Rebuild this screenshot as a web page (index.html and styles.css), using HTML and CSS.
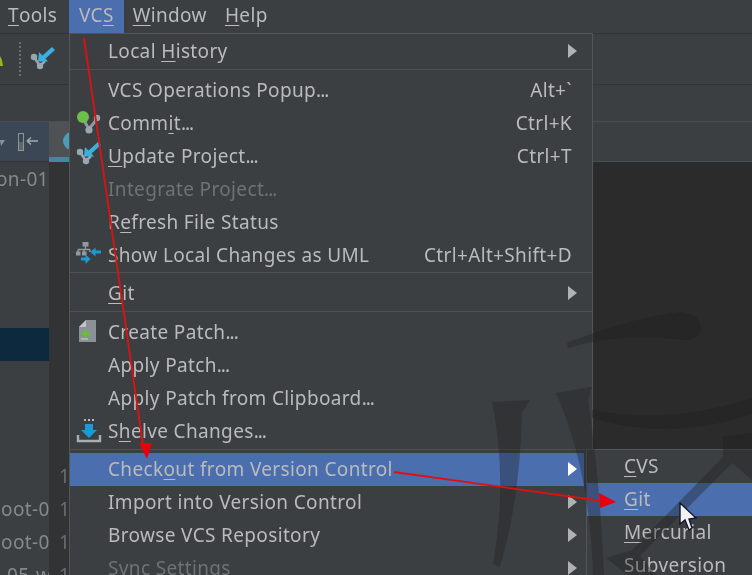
FILE: index.html
```html
<!DOCTYPE html>
<html lang="en">
<head>
    <meta charset="UTF-8">
    <meta name="viewport" content="width=device-width, initial-scale=1.0">
    <title>VCS Menu</title>
    <link rel="stylesheet" href="styles.css">
</head>
<body>
    <svg class="defs" width="0" height="0">
        <symbol id="update-icon" viewBox="0 0 26 26">
            <path d="M4 11 L10 20 L15 15" fill="none" stroke="#9aa7b0" stroke-width="2.5"/>
            <circle cx="4" cy="11" r="3.2" fill="#9aa7b0"/>
            <circle cx="10" cy="20" r="3.2" fill="#9aa7b0"/>
            <path d="M8 15.5 L9 6 L12.5 9.5 L22 1 L25 4 L15.5 12.5 L18 15.5 Z" fill="#3bb0e0"/>
        </symbol>
        <symbol id="submenu-arrow" viewBox="0 0 9 14">
            <path d="M0 0 L9 7 L0 14 Z" fill="currentColor"/>
        </symbol>
    </svg>

    <div class="page">
        <div class="menubar">
            <span class="menubar-item"><u>T</u>ools</span>
            <span class="menubar-item active">VC<u>S</u></span>
            <span class="menubar-item"><u>W</u>indow</span>
            <span class="menubar-item"><u>H</u>elp</span>
        </div>

        <div class="toolbar">
            <svg class="tool-android" width="6" height="14" viewBox="0 0 6 14"><path d="M0 12 L0 5 L2 2 L4 6 L5 12 Z" fill="#9cb31c"/></svg>
            <span class="tool-sep"></span>
            <svg class="tool-update" width="26" height="26"><use href="#update-icon"/></svg>
        </div>
        <div class="navbar"></div>

        <div class="workspace">
            <div class="sidebar">
                <div class="sidebar-head">
                    <svg class="head-drop" width="5" height="6" viewBox="0 0 5 6"><path d="M0 0 H5 L1 6 Z" fill="#8c9399"/></svg>
                    <svg class="head-pin" width="20" height="18" viewBox="0 0 20 18">
                        <rect x="0.5" y="0.5" width="5" height="17" fill="#5f6568" stroke="#8c9399"/>
                        <rect x="1" y="1" width="4" height="8" fill="#3b4754"/>
                        <path d="M9 8 H20 M9 8 L13 4.5 M9 8 L13 11.5" fill="none" stroke="#a5aaae" stroke-width="1.4"/>
                    </svg>
                </div>
                <div class="tree">
                    <div class="tree-row name-a">on-01</div>
                    <div class="tree-row"></div>
                    <div class="tree-row"></div>
                    <div class="tree-row"></div>
                    <div class="tree-row"></div>
                    <div class="tree-row selected"></div>
                    <div class="tree-row"></div>
                    <div class="tree-row"></div>
                    <div class="tree-row"></div>
                    <div class="tree-row"></div>
                    <div class="tree-row name-b">boot-01</div>
                    <div class="tree-row name-b">boot-04</div>
                    <div class="tree-row name-c">05-w</div>
                </div>
            </div>
            <div class="gutter">
                <div class="gutter-tab">
                    <span class="tab-dot"></span>
                </div>
                <div class="gutter-lines">
                    <div class="line-no">1</div>
                    <div class="line-no">1</div>
                    <div class="line-no">1</div>
                    <div class="line-no">1</div>
                </div>
            </div>
            <div class="editor"></div>
        </div>

        <div class="menu">
            <div class="menu-row"><span class="label">Local <u>H</u>istory</span><svg class="arrow" width="9" height="14"><use href="#submenu-arrow"/></svg></div>
            <div class="menu-sep"></div>
            <div class="menu-row"><span class="label">VCS Operations Popup<span class="dots">...</span></span><span class="keys">Alt+`</span></div>
            <div class="menu-row">
                <svg class="icon" width="26" height="26" viewBox="0 0 26 26">
                    <path d="M7 9 L13 19 L21 9" fill="none" stroke="#8f9aa2" stroke-width="3"/>
                    <circle cx="21" cy="8" r="3.2" fill="#9aa7b0"/>
                    <circle cx="13" cy="20" r="3.6" fill="#9aa7b0"/>
                    <circle cx="7" cy="7" r="6" fill="#6cc04a"/>
                </svg>
                <span class="label">Comm<u>i</u>t<span class="dots">...</span></span><span class="keys">Ctrl+K</span>
            </div>
            <div class="menu-row">
                <svg class="icon icon-high" width="26" height="26"><use href="#update-icon"/></svg>
                <span class="label"><u>U</u>pdate Project<span class="dots">...</span></span><span class="keys">Ctrl+T</span>
            </div>
            <div class="menu-row disabled"><span class="label">Integrate Project<span class="dots">...</span></span></div>
            <div class="menu-row"><span class="label">R<u>e</u>fresh File Status</span></div>
            <div class="menu-row">
                <svg class="icon icon-high" width="26" height="26" viewBox="0 0 26 26">
                    <rect x="6.5" y="2" width="6" height="4.5" fill="#8f9aa2"/>
                    <path d="M9.5 6 V9.5 M2 9.5 H14 M2 9.5 V12 M8 9.5 V12 M14 9.5 V12" fill="none" stroke="#8f9aa2" stroke-width="1.4"/>
                    <rect x="0" y="11.5" width="4.5" height="4" fill="#8f9aa2"/>
                    <rect x="6" y="11.5" width="4.5" height="4" fill="#8f9aa2"/>
                    <path d="M25 10.5 H19.5 V7.5 L14.5 12 L19.5 16.5 V13.5 H25 Z" fill="#1b9ad6"/>
                    <path d="M5 17.5 H9.5 V14.5 L14.5 19 L9.5 24 V20.5 H5 Z" fill="#1b9ad6"/>
                </svg>
                <span class="label">Show Local Changes as UML</span><span class="keys">Ctrl+Alt+Shift+D</span>
            </div>
            <div class="menu-sep flush"></div>
            <div class="menu-row"><span class="label"><u>G</u>it</span><svg class="arrow" width="9" height="14"><use href="#submenu-arrow"/></svg></div>
            <div class="menu-sep"></div>
            <div class="menu-row">
                <svg class="icon" width="26" height="26" viewBox="0 0 26 26">
                    <path d="M3 8 L10 1 H20 V23 H3 Z" fill="#8b9296"/>
                    <path d="M3 8 L10 1 V8 Z" fill="#c0c4c6"/>
                    <path d="M6 15 H13 M9.5 11 V19" stroke="#62c820" stroke-width="2"/>
                    <path d="M5 20 H12" stroke="#c5c9cb" stroke-width="1.2"/>
                </svg>
                <span class="label">Create Patch<span class="dots">...</span></span>
            </div>
            <div class="menu-row"><span class="label">Apply Patch<span class="dots">...</span></span></div>
            <div class="menu-row"><span class="label">Apply Patch from Clipboard<span class="dots">...</span></span></div>
            <div class="menu-row">
                <svg class="icon" width="26" height="26" viewBox="0 0 26 26">
                    <path d="M8 2 H10 M12 2 H14 M16 2 H18" stroke="#b5bcc0" stroke-width="2"/>
                    <path d="M9 6 H17 V12 H21 L13 20 L5 12 H9 Z" fill="#1b9ad6"/>
                    <path d="M2 17 V23 H24 V17" fill="none" stroke="#a8afb3" stroke-width="2.4"/>
                </svg>
                <span class="label">S<u>h</u>elve Changes<span class="dots">...</span></span>
            </div>
            <div class="menu-sep short"></div>
            <div class="menu-row highlight"><span class="label">Check<u>o</u>ut from Version Control</span><svg class="arrow bright" width="9" height="14"><use href="#submenu-arrow"/></svg></div>
            <div class="menu-row"><span class="label">Import into Version Control</span><svg class="arrow" width="9" height="14"><use href="#submenu-arrow"/></svg></div>
            <div class="menu-row"><span class="label">Browse VCS Repository</span><svg class="arrow" width="9" height="14"><use href="#submenu-arrow"/></svg></div>
            <div class="menu-row disabled"><span class="label">Sync Settings</span><svg class="arrow" width="9" height="14"><use href="#submenu-arrow"/></svg></div>
        </div>

        <div class="submenu">
            <div class="menu-row"><span class="label"><u>C</u>VS</span></div>
            <div class="menu-row highlight"><span class="label"><u>G</u>it</span></div>
            <div class="menu-row"><span class="label"><u>M</u>ercurial</span></div>
            <div class="menu-row"><span class="label"><u>S</u>ubversion</span></div>
        </div>

        <!-- background logo showing through the translucent menus -->
        <svg class="watermark" width="752" height="575" viewBox="0 0 752 575">
            <path d="M567 343 Q630 318 680 312 Q700 314 701 328 Q699 340 685 340 Q620 332 568 348 Z"/>
            <path d="M492 402 L530 400 L522 413 Q520 500 500 567 L493 564 Q508 480 492 402 Z"/>
            <path d="M556 393 L592 387 L588 400 Q600 480 604 575 L593 575 Q590 470 556 393 Z"/>
            <path d="M592 410 Q670 425 752 398 V414 Q670 442 592 418 Z"/>
            <path d="M723 437 L752 433 V480 L732 463 L640 556 L656 575 L628 575 L606 558 L632 550 L723 457 Z"/>
        </svg>

        <!-- red arrows drawn over the screenshot -->
        <svg class="annotations" width="752" height="575" viewBox="0 0 752 575">
            <path d="M84 38 L143 445" stroke="#e01010" stroke-width="1.8" fill="none"/>
            <path d="M139 443 L152 443 L147 459 Z" fill="#e8000b"/>
            <path d="M394 472 L602 501" stroke="#e01010" stroke-width="1.8" fill="none"/>
            <path d="M599 493 L616 502 L600 508 Z" fill="#e8000b"/>
        </svg>

        <svg class="cursor" width="20" height="30" viewBox="0 0 20 30">
            <path d="M2 1 L2 22 L7 18 L11 28 L14 26 L11 17 L18 16 Z" fill="#f2f2f2" stroke="#14182c" stroke-width="1.4"/>
        </svg>
    </div>
</body>
</html>
```

FILE: styles.css
```css
* {
    box-sizing: border-box;
}
html, body {
    margin: 0;
    padding: 0;
}
body {
    font-family: "Noto Sans", sans-serif;
    font-size: 19px;
    letter-spacing: 0.35px;
    color: #bbbbbb;
    background: #3c3f41;
}
u {
    text-underline-offset: 3px;
    text-decoration-thickness: 1px;
}
.defs {
    position: absolute;
}
.page {
    position: relative;
    width: 752px;
    height: 575px;
    overflow: hidden;
    background: #3c3f41;
    filter: blur(0.4px);
}
.menubar {
    display: flex;
    height: 33px;
    padding-left: 8px;
}
.menubar-item {
    display: flex;
    align-items: center;
    padding: 0 9px 2px;
    line-height: 1;
}
.menubar-item:first-child {
    width: 61px;
    padding: 0 0 2px;
}
.menubar-item.active {
    padding: 0 10px 2px;
    background: #4b6eaf;
}
.toolbar {
    display: flex;
    align-items: center;
    height: 52px;
    border-top: 1px solid #323232;
    border-bottom: 1px solid #323436;
    position: relative;
}
.tool-android {
    margin: 4px 0 0 -2px;
}
.tool-sep {
    width: 0;
    height: 34px;
    margin-left: 15px;
    border-left: 2px dotted #6a6e70;
}
.tool-update {
    margin-left: 9px;
}
.navbar {
    height: 37px;
    border-bottom: 1px solid #4c4f51;
}
.workspace {
    display: flex;
    height: 453px;
}
.sidebar {
    width: 49px;
    overflow: hidden;
}
.sidebar-head {
    display: flex;
    align-items: center;
    height: 40px;
    background: #3b4754;
    border-bottom: 1px solid #323232;
}
.head-drop {
    margin-top: 2px;
}
.head-pin {
    margin-left: 13px;
}
.tree {
    padding-top: 1px;
}
.tree-row {
    height: 33px;
    line-height: 33px;
    white-space: nowrap;
    color: #85898b;
}
.tree-row.selected {
    background: #0d293e;
}
.name-a {
    margin-left: -4px;
}
.name-b {
    margin-left: -11px;
}
.name-c {
    margin-left: 7px;
}
.gutter {
    width: 20px;
    background: #313335;
}
.gutter-tab {
    position: relative;
    height: 40px;
    background: #4e5254;
    border-bottom: 5px solid #3f8a9e;
    overflow: hidden;
}
.tab-dot {
    position: absolute;
    left: 14px;
    top: 10px;
    width: 18px;
    height: 18px;
    border-radius: 50%;
    background: #4d9bb8;
}
.gutter-lines {
    padding-top: 298px;
}
.line-no {
    height: 33px;
    line-height: 33px;
    padding-left: 10px;
    color: #6a6e70;
}
.editor {
    flex: 1;
    margin-top: 39px;
    background: #2b2b2b;
    border-top: 1px solid #4c4f51;
}
.menu {
    position: absolute;
    left: 69px;
    top: 33px;
    width: 524px;
    padding: 1px 8px 0 0;
    background: #3c3f41;
    border: solid #555555;
    border-width: 1px 1px 0 1px;
}
.submenu {
    position: absolute;
    left: 586px;
    top: 449px;
    width: 180px;
    height: 130px;
    background: #3c3f41;
    border: solid #555555;
    border-width: 1px 0 0 1px;
}
.menu-row {
    position: relative;
    display: flex;
    align-items: center;
    height: 33px;
    padding: 0 0 2px 38px;
    white-space: nowrap;
}
.submenu .menu-row {
    padding-left: 37px;
}
.menu-row.highlight {
    background: #4b6eaf;
}
.menu-row.disabled {
    color: #6f7274;
}
.dots {
    letter-spacing: -1px;
}
.icon {
    position: absolute;
    left: 6px;
    top: 3px;
}
.icon.icon-high {
    top: 1px;
}
.keys {
    margin-left: auto;
    padding-right: 12px;
}
.arrow {
    margin-left: auto;
    margin-right: 7px;
    color: #afb1b3;
}
.arrow.bright {
    color: #ffffff;
}
.menu-sep {
    height: 6px;
    margin-right: -8px;
    background: linear-gradient(#3c3f41 1px, #515151 1px, #515151 2px, #3c3f41 2px);
}
.menu-sep.flush {
    height: 5px;
    background: linear-gradient(#515151 1px, #3c3f41 1px);
}
.menu-sep.short {
    height: 5px;
}
.watermark {
    position: absolute;
    left: 0;
    top: 0;
    fill: rgba(30, 30, 30, 0.35);
    pointer-events: none;
}
.annotations {
    position: absolute;
    left: 0;
    top: 0;
}
.cursor {
    position: absolute;
    left: 678px;
    top: 502px;
}
```
